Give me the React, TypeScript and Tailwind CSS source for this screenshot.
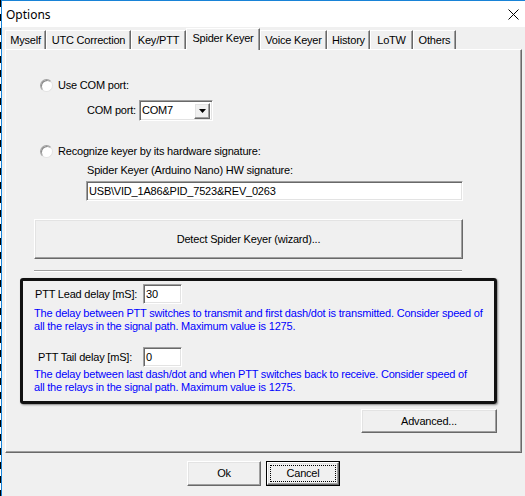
import React from "react";

const raised =
  "border border-t-white border-l-white border-r-[#696969] border-b-[#696969] shadow-[inset_-1px_-1px_#a0a0a0,inset_1px_1px_#e3e3e3]";
const sunken =
  "border border-t-[#a0a0a0] border-l-[#a0a0a0] border-r-white border-b-white shadow-[inset_1px_1px_#696969,inset_-1px_-1px_#e3e3e3]";

const tabs = [
  { label: "Myself", w: "w-[41px]" },
  { label: "UTC Correction", w: "w-[85px]" },
  { label: "Key/PTT", w: "w-[55px]" },
  { label: "Spider Keyer", w: "w-[74px]", active: true },
  { label: "Voice Keyer", w: "w-[67px]" },
  { label: "History", w: "w-[43px]" },
  { label: "LoTW", w: "w-[43px]" },
  { label: "Others", w: "w-[43px]" },
];

function Radio({ label }: { label: string }) {
  return (
    <div className="flex items-center h-[13px] ml-[34px]">
      <div className="w-[13px] h-[13px] rounded-full bg-white border border-[#a0a0a0] border-r-[#e3e3e3] border-b-[#e3e3e3] shadow-[inset_1px_1px_#8a8a8a]" />
      <span className="ml-[5px]">{label}</span>
    </div>
  );
}

function Button({
  label,
  className,
  isDefault,
}: {
  label: string;
  className: string;
  isDefault?: boolean;
}) {
  if (isDefault) {
    return (
      <div className={`${className} border border-black p-0`}>
        <div className={`${raised} w-full h-full flex items-center justify-center p-[2px]`}>
          <div className="w-full h-full border border-dotted border-black flex items-center justify-center">
            {label}
          </div>
        </div>
      </div>
    );
  }
  return (
    <div className={`${className} ${raised} flex items-center justify-center`}>{label}</div>
  );
}

export default function App() {
  return (
    <div
      className="w-[525px] h-[496px] bg-[#f0f0f0] flex text-[11px] leading-[13px] tracking-[-0.2px] text-black overflow-hidden"
      style={{ fontFamily: '"Liberation Sans", Arial, sans-serif' }}
    >
      {/* left screen edge */}
      <div className="w-px h-full bg-[repeating-linear-gradient(180deg,#000_0px,#000_7px,#fff_7px,#fff_14px)]" />
      <div className="flex-1 flex flex-col border-l border-t border-[#1883d7]">
        {/* Title bar */}
        <div className="h-[26px] bg-white flex items-center justify-between pl-[4px] pr-[6px]">
          <span
            className="text-[12px] tracking-normal"
            style={{ fontFamily: '"Noto Sans", "Open Sans", sans-serif' }}
          >
            Options
          </span>
          <svg width="11" height="11" viewBox="0 0 11 11" className="mt-[1px]">
            <path d="M0.5 0.5L10.5 10.5M10.5 0.5L0.5 10.5" stroke="#000" strokeWidth="1" />
          </svg>
        </div>

        {/* Tabs */}
        <div className="flex items-end pl-[3px] mt-[1px] h-[21px] relative z-10">
          {tabs.map((t) =>
            t.active ? (
              <div
                key={t.label}
                className={`${t.w} h-[22px] -mb-px bg-[#f0f0f0] border-t border-l border-t-white border-l-white border-r border-r-[#696969] shadow-[inset_-1px_0_#a0a0a0] flex items-start justify-center pt-[3px]`}
              >
                {t.label}
              </div>
            ) : (
              <div
                key={t.label}
                className={`${t.w} h-[19px] border-t border-l border-t-white border-l-white border-r border-r-[#696969] shadow-[inset_-1px_0_#a0a0a0] flex items-center justify-center pt-px`}
              >
                {t.label}
              </div>
            )
          )}
        </div>

        {/* Tab panel */}
        <div className="ml-[3px] w-[517px] h-[404px] border border-t-white border-l-white border-r-[#696969] border-b-[#696969] shadow-[inset_-1px_-1px_#a0a0a0] flex flex-col">
          <div className="mt-[29px]">
            <Radio label="Use COM port:" />
          </div>

          <div className="flex items-center mt-[8px] ml-[81px] h-[21px]">
            <span className="w-[52px] whitespace-nowrap">COM port:</span>
            <div className={`${sunken} w-[74px] h-[21px] bg-white flex items-center justify-between pl-[2px] pr-[2px]`}>
              <span>COM7</span>
              <div className={`${raised} w-[16px] h-[16px] bg-[#f0f0f0] flex items-center justify-center`}>
                <svg width="7" height="4" viewBox="0 0 7 4">
                  <path d="M0 0H7L3.5 4Z" fill="#000" />
                </svg>
              </div>
            </div>
          </div>

          <div className="mt-[24px]">
            <Radio label="Recognize keyer by its hardware signature:" />
          </div>

          <div className="mt-[6px] ml-[81px] h-[13px]">Spider Keyer (Arduino Nano) HW signature:</div>

          <div className={`${sunken} mt-[4px] ml-[80px] w-[377px] h-[20px] bg-white flex items-center pl-[2px]`}>
            USB\VID_1A86&amp;PID_7523&amp;REV_0263
          </div>

          <Button
            label="Detect Spider Keyer (wizard)..."
            className="mt-[18px] ml-[28px] w-[429px] h-[40px]"
          />

          <div className="mt-[11px] ml-[28px] w-[428px] h-[2px] border-t border-t-[#a0a0a0] border-b border-b-white" />

          {/* Highlighted PTT delay box */}
          <div className="mt-[6px] ml-[14px] w-[477px] h-[126px] border-[3px] border-[#111] rounded-[3px] shadow-[1px_1px_2px_rgba(0,0,0,0.45)] flex flex-col">
            <div className="flex items-center mt-[3px] h-[20px] pl-[12px]">
              <span className="w-[108px] whitespace-nowrap">PTT Lead delay [mS]:</span>
              <div className={`${sunken} w-[39px] h-[20px] bg-white flex items-center pl-[2px]`}>30</div>
            </div>
            <p className="mt-[3px] pl-[11px] whitespace-nowrap text-[#0000ff]">
              The delay between PTT switches to transmit and first dash/dot is transmitted. Consider speed of
              <br />
              all the relays in the signal path. Maximum value is 1275.
            </p>
            <div className="flex items-center mt-[14px] h-[20px] pl-[15px]">
              <span className="w-[105px] whitespace-nowrap">PTT Tail delay [mS]:</span>
              <div className={`${sunken} w-[39px] h-[20px] bg-white flex items-center pl-[2px]`}>0</div>
            </div>
            <p className="mt-[1px] pl-[11px] whitespace-nowrap text-[#0000ff]">
              The delay between last dash/dot and when PTT switches back to receive. Consider speed of
              <br />
              all the relays in the signal path. Maximum value is 1275.
            </p>
          </div>

          <Button label="Advanced..." className="mt-[5px] ml-[355px] w-[136px] h-[24px]" />
        </div>

        {/* Dialog buttons */}
        <div className="flex justify-center gap-[5px] mt-[8px]">
          <Button label="Ok" className="w-[74px] h-[25px]" />
          <Button label="Cancel" className="w-[74px] h-[25px]" isDefault />
        </div>
      </div>
    </div>
  );
}
